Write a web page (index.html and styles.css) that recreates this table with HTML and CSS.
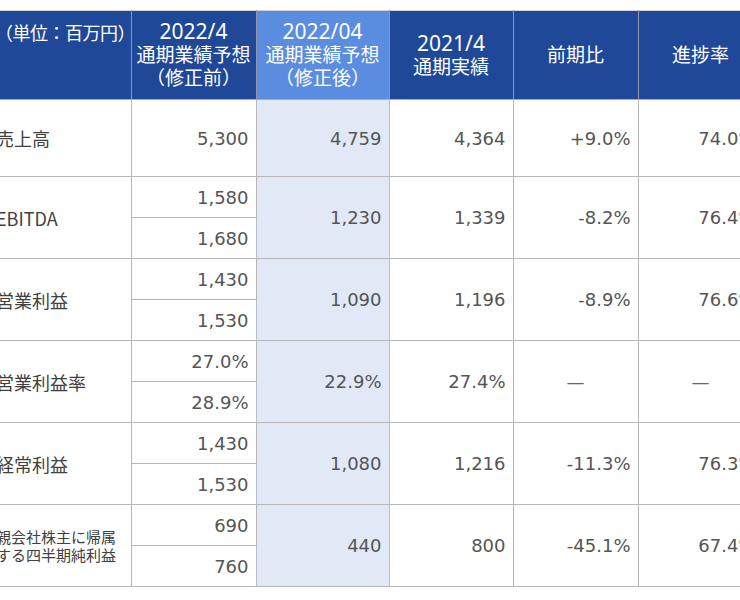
FILE: index.html
```html
<!DOCTYPE html>
<html lang="ja">
<head>
<meta charset="utf-8">
<title>通期業績予想</title>
<link rel="stylesheet" href="styles.css">
</head>
<body>
<table class="fin">
  <colgroup>
    <col class="c-label">
    <col class="c-num">
    <col class="c-hl">
    <col class="c-num2">
    <col class="c-num">
    <col class="c-num">
  </colgroup>
  <thead>
    <tr class="head">
      <th class="unit">（単位：百万円）</th>
      <th><span class="yr">2022/4</span><br>通期業績予想<br>（修正前）</th>
      <th class="hl-head"><span class="yr">2022/04</span><br>通期業績予想<br>（修正後）</th>
      <th><span class="yr">2021/4</span><br>通期実績</th>
      <th>前期比</th>
      <th>進捗率</th>
    </tr>
  </thead>
  <tbody>
    <tr class="single">
      <td class="label">売上高</td>
      <td class="num">5,300</td>
      <td class="num hl">4,759</td>
      <td class="num">4,364</td>
      <td class="num">+9.0%</td>
      <td class="num">74.0%</td>
    </tr>
    <tr class="sub">
      <td class="label" rowspan="2">EBITDA</td>
      <td class="num">1,580</td>
      <td class="num hl" rowspan="2">1,230</td>
      <td class="num" rowspan="2">1,339</td>
      <td class="num" rowspan="2">-8.2%</td>
      <td class="num" rowspan="2">76.4%</td>
    </tr>
    <tr class="sub"><td class="num">1,680</td></tr>
    <tr class="sub">
      <td class="label" rowspan="2">営業利益</td>
      <td class="num">1,430</td>
      <td class="num hl" rowspan="2">1,090</td>
      <td class="num" rowspan="2">1,196</td>
      <td class="num" rowspan="2">-8.9%</td>
      <td class="num" rowspan="2">76.6%</td>
    </tr>
    <tr class="sub"><td class="num">1,530</td></tr>
    <tr class="sub">
      <td class="label" rowspan="2">営業利益率</td>
      <td class="num">27.0%</td>
      <td class="num hl" rowspan="2">22.9%</td>
      <td class="num" rowspan="2">27.4%</td>
      <td class="dash" rowspan="2">—</td>
      <td class="dash" rowspan="2">—</td>
    </tr>
    <tr class="sub"><td class="num">28.9%</td></tr>
    <tr class="sub">
      <td class="label" rowspan="2">経常利益</td>
      <td class="num">1,430</td>
      <td class="num hl" rowspan="2">1,080</td>
      <td class="num" rowspan="2">1,216</td>
      <td class="num" rowspan="2">-11.3%</td>
      <td class="num" rowspan="2">76.3%</td>
    </tr>
    <tr class="sub"><td class="num">1,530</td></tr>
    <tr class="sub">
      <td class="label small" rowspan="2">親会社株主に帰属<br>する四半期純利益</td>
      <td class="num">690</td>
      <td class="num hl" rowspan="2">440</td>
      <td class="num" rowspan="2">800</td>
      <td class="num" rowspan="2">-45.1%</td>
      <td class="num" rowspan="2">67.4%</td>
    </tr>
    <tr class="sub"><td class="num">760</td></tr>
  </tbody>
</table>
</body>
</html>
```

FILE: styles.css
```css
html, body {
  margin: 0;
  padding: 0;
  overflow: hidden;
  background: #ffffff;
}

body {
  padding-top: 10px;
  font-family: "Noto Sans CJK JP", sans-serif;
}

.fin {
  border-collapse: collapse;
  table-layout: fixed;
  width: 777px;
  margin-left: -14px;
  border-top: 1px solid #d4d4d4;
}

.c-label { width: 145px; }
.c-num { width: 125px; }
.c-hl { width: 133px; }
.c-num2 { width: 124px; }

tr.head {
  height: 89px;
}

.head th {
  box-sizing: border-box;
  padding: 0;
  background: #1f4898;
  color: #ffffff;
  font-family: "Noto Sans", "Noto Sans CJK JP", sans-serif;
  font-weight: normal;
  font-size: 19px;
  line-height: 23px;
  text-align: center;
  vertical-align: middle;
  border-left: 1px solid #8f97a8;
  border-right: 1px solid #8f97a8;
  border-bottom: 1px solid #a9adb6;
}

.head .yr {
  font-size: 21px;
}

.head th.unit {
  text-align: left;
  vertical-align: top;
  padding: 10px 0 0 9px;
  font-family: "Noto Sans CJK JP", sans-serif;
  font-size: 18px;
  letter-spacing: -0.5px;
  border-left: none;
  white-space: nowrap;
}

.head th.hl-head {
  background: #5a8ce0;
}

td {
  padding: 0 7px 0 0;
  border: 1px solid #b7b7b7;
  color: #555555;
  vertical-align: middle;
}

tr.single td {
  height: 76px;
}

tr.sub td {
  height: 40px;
}

td.label {
  padding-left: 10px;
  text-align: left;
  font-family: "Noto Sans CJK JP", sans-serif;
  font-size: 18px;
  color: #404040;
  border-left: none;
  white-space: nowrap;
}

td.label.small {
  font-size: 15px;
  line-height: 18px;
}

td.num {
  text-align: right;
  font-family: "DejaVu Sans", Verdana, sans-serif;
  font-size: 18px;
}

td.dash {
  padding: 0;
  text-align: center;
  font-family: "DejaVu Sans", sans-serif;
  font-size: 18px;
  color: #666666;
}

td.hl {
  background: #e1e9f7;
  border-left-color: #b8bfcc;
  border-right-color: #b8bfcc;
}
```
